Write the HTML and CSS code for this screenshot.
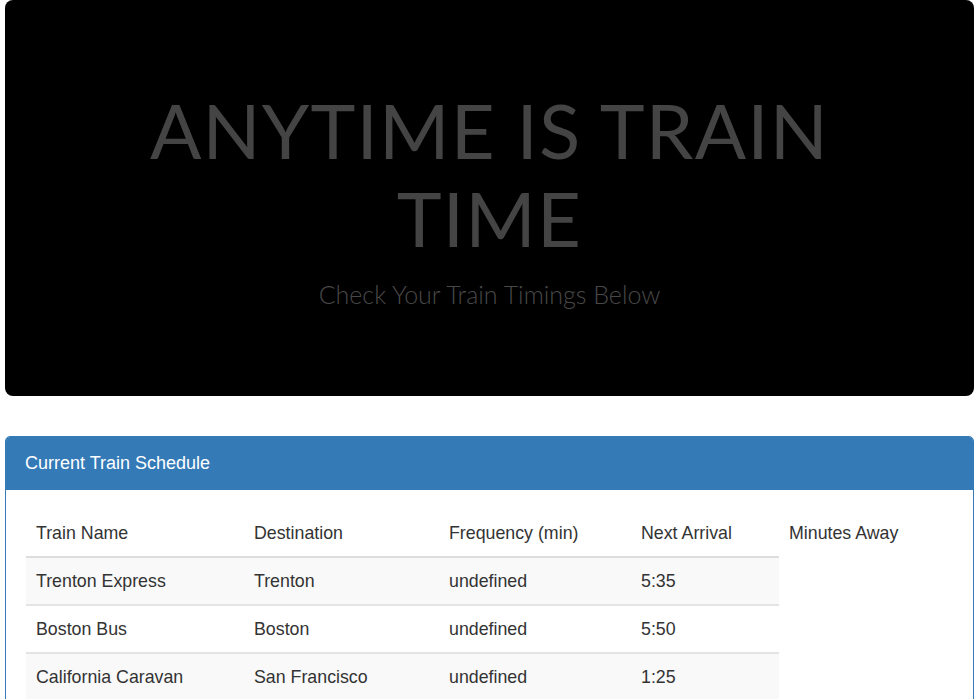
FILE: index.html
```html
<!DOCTYPE html>
<html>
<head>
<meta charset="utf-8">
<title>Train Scheduler</title>
<link rel="stylesheet" href="styles.css">
</head>
<body>
<div class="container">
  <div class="jumbotron">
    <h1 class="headline">ANYTIME IS TRAIN TIME</h1>
    <p class="tagline">Check Your Train Timings Below</p>
  </div>
  <div class="panel">
    <div class="panel-heading">
      <h3 class="panel-title">Current Train Schedule</h3>
    </div>
    <div class="panel-body">
      <table class="table">
        <thead>
          <tr>
            <th class="c1">Train Name</th>
            <th class="c2">Destination</th>
            <th class="c3">Frequency (min)</th>
            <th class="c4">Next Arrival</th>
            <th class="c5">Minutes Away</th>
          </tr>
        </thead>
        <tbody>
          <tr class="odd">
            <td>Trenton Express</td>
            <td>Trenton</td>
            <td>undefined</td>
            <td>5:35</td>
          </tr>
          <tr>
            <td>Boston Bus</td>
            <td>Boston</td>
            <td>undefined</td>
            <td>5:50</td>
          </tr>
          <tr class="odd">
            <td>California Caravan</td>
            <td>San Francisco</td>
            <td>undefined</td>
            <td>1:25</td>
          </tr>
        </tbody>
      </table>
    </div>
  </div>
</div>
</body>
</html>
```

FILE: styles.css
```css
html, body {
  margin: 0;
  padding: 0;
  background: #fff;
}

body {
  font-family: "Liberation Sans", Arial, Helvetica, sans-serif;
  color: #333;
}

.container {
  margin: 0 6px 0 5px;
}

.jumbotron {
  background: #000;
  border-radius: 8px;
  height: 396px;
  box-sizing: border-box;
  padding-top: 86px;
  text-align: center;
  margin-bottom: 40px;
}

.headline {
  margin: 0 auto;
  width: 740px;
  font-family: Lato, "Open Sans", sans-serif;
  font-weight: 400;
  font-size: 76px;
  line-height: 88px;
  color: #444;
  letter-spacing: 1.2px;
}

.tagline {
  margin: 14px 0 0;
  font-family: Lato, "Open Sans", sans-serif;
  font-weight: 300;
  font-size: 25px;
  line-height: 36px;
  color: #484848;
}

.panel {
  border: 1px solid #337ab7;
  border-radius: 5px;
  overflow: hidden;
}

.panel-heading {
  background: #337ab7;
  height: 53px;
  box-sizing: border-box;
  padding: 0 19px;
  display: flex;
  align-items: center;
}

.panel-title {
  margin: 0;
  font-size: 18px;
  font-weight: 400;
  color: #fff;
  letter-spacing: 0;
}

.panel-body {
  padding: 20px 20px 30px;
}

.table {
  border-collapse: collapse;
  width: 927px;
  font-size: 17.8px;
}

.table th,
.table td {
  text-align: left;
  font-weight: 400;
  padding: 0 10px;
  height: 46px;
  vertical-align: middle;
}

.table th {
  border-bottom: 2px solid #ddd;
}

.table td {
  border-top: 2px solid #e4e4e4;
}

.table th.c5 {
  border-bottom: none;
}

.table .odd td {
  background: #f9f9f9;
}

.c1 { width: 198px; }
.c2 { width: 175px; }
.c3 { width: 172px; }
.c4 { width: 128px; }
.c5 { width: 154px; }
```
